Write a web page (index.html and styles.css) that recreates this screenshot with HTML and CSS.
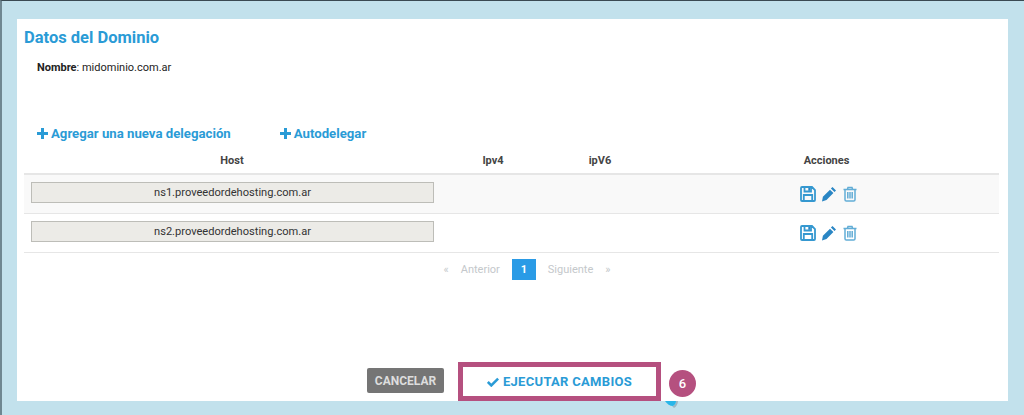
FILE: index.html
```html
<!DOCTYPE html>
<html lang="es">
<head>
<meta charset="utf-8">
<title>Datos del Dominio</title>
<link rel="stylesheet" href="styles.css">
</head>
<body>
<div class="frame">
  <main class="panel">
    <h1 class="title">Datos del Dominio</h1>
    <p class="name"><b>Nombre</b>: midominio.com.ar</p>
    <div class="links">
      <a class="add add-first"><svg class="plus" viewBox="0 0 11 11"><path d="M4 0h3v4h4v3H7v4H4V7H0V4h4z"/></svg>Agregar una nueva delegación</a>
      <a class="add"><svg class="plus" viewBox="0 0 11 11"><path d="M4 0h3v4h4v3H7v4H4V7H0V4h4z"/></svg>Autodelegar</a>
    </div>
    <div class="table">
      <div class="row head">
        <div>Host</div><div>Ipv4</div><div>ipV6</div><div>Acciones</div>
      </div>
      <div class="row item odd">
        <div><div class="field">ns1.proveedordehosting.com.ar</div></div><div></div><div></div>
        <div class="icons">
          <svg class="ic save" viewBox="0 0 16 16"><path class="ln" d="M1 2a1 1 0 0 1 1-1h10l3 3v10a1 1 0 0 1-1 1H2a1 1 0 0 1-1-1zM4.500 1v4.500h6.500V1M3.800 15V9h8.400v6"/><path class="fl" d="M8.300 2h1.700v2.800H8.300z"/></svg>
          <svg class="ic" viewBox="0 0 16 16"><path class="fl" d="M11.500 1l3.500 3.500-1.500 1.600-3.600-3.500zM9 3.700l3.400 3.400-6.900 7L1 15.500l.9-4.700z"/></svg>
          <svg class="ic trash" viewBox="0 0 16 16"><path class="ln" d="M1.500 3.500h13M5.300 3.500l.7-2h4l.7 2M3 3.500v10.200a1.300 1.300 0 0 0 1.300 1.300h7.400a1.300 1.300 0 0 0 1.300-1.300V3.500M5.800 6v6.500M8 6v6.500M10.200 6v6.500"/></svg>
        </div>
      </div>
      <div class="row item">
        <div><div class="field">ns2.proveedordehosting.com.ar</div></div><div></div><div></div>
        <div class="icons">
          <svg class="ic save" viewBox="0 0 16 16"><path class="ln" d="M1 2a1 1 0 0 1 1-1h10l3 3v10a1 1 0 0 1-1 1H2a1 1 0 0 1-1-1zM4.500 1v4.500h6.500V1M3.800 15V9h8.400v6"/><path class="fl" d="M8.300 2h1.700v2.800H8.300z"/></svg>
          <svg class="ic" viewBox="0 0 16 16"><path class="fl" d="M11.500 1l3.500 3.500-1.500 1.600-3.600-3.500zM9 3.700l3.400 3.400-6.900 7L1 15.500l.9-4.700z"/></svg>
          <svg class="ic trash" viewBox="0 0 16 16"><path class="ln" d="M1.500 3.500h13M5.300 3.500l.7-2h4l.7 2M3 3.500v10.200a1.300 1.300 0 0 0 1.300 1.300h7.400a1.300 1.300 0 0 0 1.300-1.300V3.500M5.800 6v6.500M8 6v6.500M10.200 6v6.500"/></svg>
        </div>
      </div>
    </div>
    <nav class="pager">
      <span>«</span><span class="word">Anterior</span><span class="cur">1</span><span class="word">Siguiente</span><span>»</span>
    </nav>
    <div class="actions">
      <button class="cancel">CANCELAR</button>
      <button class="run"><svg class="check" viewBox="0 0 14 11"><path d="M1 5.500l4 4 8-8"/></svg>EJECUTAR CAMBIOS</button>
      <span class="step">6</span>
    </div>
    <svg class="tail" viewBox="0 0 13 8"><path class="tail-shadow" d="M7 5c2 0 4-2 4-5h2c0 3-2 6-4 7z"/><path class="tail-fill" d="M0 0h11c0 2-1 4-3 5C5 5 2 3 0 0z"/></svg>
  </main>
</div>
</body>
</html>
```
FILE: styles.css
```css
* { box-sizing: border-box; }
html, body { margin: 0; height: 100%; }
body { font-family: Roboto, "Liberation Sans", sans-serif; color: #333; background: #c2e1ec; overflow: hidden; }
.frame { width: 1024px; height: 415px; padding: 18px 16px 14px 15px; border-top: 1px solid #3a4a52; border-left: 2px solid #6f8791; }
.panel { position: relative; height: 382px; background: #fff; padding: 0 0 0 7px; }
.title { margin: 0; padding-top: 10px; font-size: 16.500px; line-height: 18px; font-weight: 700; color: #2a9bd6; }
.name { margin: 14px 0 0 13px; font-size: 11px; line-height: 14px; color: #222; }
.name b { font-weight: 700; }
.links { display: flex; margin: 50px 0 0 13px; height: 16px; align-items: center; }
.add { display: flex; align-items: center; gap: 3px; font-size: 13.200px; font-weight: 700; color: #2a9bd6; }
.add-first { margin-right: 49px; }
.plus { width: 11px; height: 11px; fill: #2a9bd6; }
.table { width: 975px; margin-top: 6px; }
.row { display: grid; grid-template-columns: 416px 106px 108px 345px; align-items: center; }
.head { height: 28px; border-bottom: 2px solid #e6e6e6; font-size: 11px; font-weight: 700; color: #444; }
.head > div { text-align: center; }
.item { height: 39px; border-bottom: 1px solid #e6e6e6; }
.odd { background: #f9f9f9; }
.field { width: 403px; height: 21px; margin: 0 0 3px 7px; background: #ecebe7; border: 1px solid #bdbdb8; font-size: 11.100px; line-height: 19px; text-align: center; color: #333; }
.icons { display: flex; justify-content: center; gap: 5px; padding-left: 5px; }
.ic { width: 16px; height: 16px; }
.ln { fill: none; stroke: #3f9fd3; stroke-width: 1.500; }
.save .ln { stroke-width: 1.800; stroke: #3598d0; }
.trash .ln { stroke: #62add6; }
.fl { fill: #2a86c4; }
.pager { display: flex; justify-content: center; align-items: center; width: 975px; height: 21px; margin-top: 6px; padding-left: 31px; gap: 12px; font-size: 11px; color: #c4c8cb; }
.cur { width: 24px; height: 21px; background: #2a9be6; color: #fff; font-weight: 700; text-align: center; line-height: 21px; }
.actions { position: absolute; left: 350px; top: 343px; display: flex; align-items: center; }
.cancel { width: 77px; height: 25px; margin: -2px 14px 0 0; padding: 0; border: 0; border-radius: 2px; background: #757575; color: #ddd; font: 700 12px Roboto, sans-serif; }
.run { display: flex; align-items: center; justify-content: center; gap: 4px; width: 203px; height: 39px; padding: 0; border: 5px solid #b5507f; background: #fff; color: #2a9bd6; font: 700 13px Roboto, sans-serif; letter-spacing: .3px; }
.check { width: 12px; height: 10px; fill: none; stroke: #2a9bd6; stroke-width: 3; }
.step { width: 27px; height: 27px; margin: 3px 0 0 8px; border-radius: 50%; background: #b5507f; color: #fff; font-size: 13px; font-weight: 500; text-align: center; line-height: 27px; }
.tail { position: absolute; left: 648px; top: 382px; width: 13px; height: 8px; }
.tail-fill { fill: #29b6e8; }
.tail-shadow { fill: #9cb7c4; }
```
